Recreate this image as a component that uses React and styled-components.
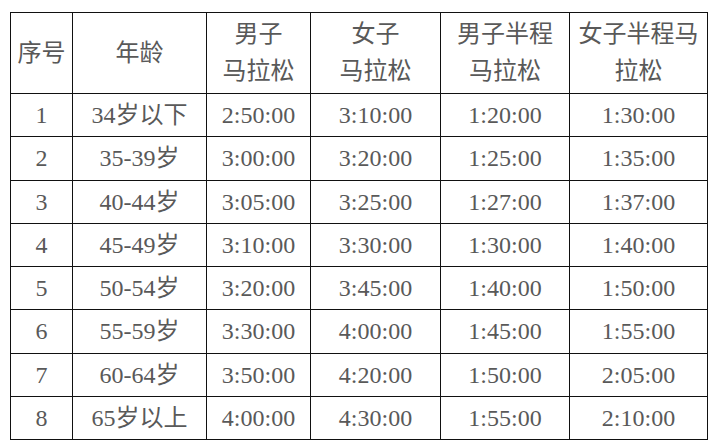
import React from "react";
import styled, { createGlobalStyle } from "styled-components";

const GlobalStyle = createGlobalStyle`
  html, body {
    margin: 0;
    padding: 0;
    background: #fff;
  }
`;

const Page = styled.div`
  padding: 12px 0 0 10px;
`;

const Table = styled.table`
  border-collapse: collapse;
  table-layout: fixed;
  width: 697px;
  font-family: "Liberation Serif", "Noto Sans CJK SC", serif;
  font-size: 24px;
  color: #595959;
`;

const Col = styled.col`
  width: ${props => props.$w}px;
`;

const Th = styled.th`
  border: 1px solid #111;
  font-weight: 400;
  line-height: 37px;
  text-align: center;
  padding: 0;
`;

const HeadRow = styled.tr`
  height: 81px;
`;

const Row = styled.tr`
  height: 43.25px;
`;

const Td = styled.td`
  border: 1px solid #111;
  text-align: center;
  padding: 0;
  line-height: 30px;
`;

const widths = [62, 134, 104, 130, 129, 138];

const headers = [
  ["序号"],
  ["年龄"],
  ["男子", "马拉松"],
  ["女子", "马拉松"],
  ["男子半程", "马拉松"],
  ["女子半程马", "拉松"],
];

const rows = [
  ["1", "34岁以下", "2:50:00", "3:10:00", "1:20:00", "1:30:00"],
  ["2", "35-39岁", "3:00:00", "3:20:00", "1:25:00", "1:35:00"],
  ["3", "40-44岁", "3:05:00", "3:25:00", "1:27:00", "1:37:00"],
  ["4", "45-49岁", "3:10:00", "3:30:00", "1:30:00", "1:40:00"],
  ["5", "50-54岁", "3:20:00", "3:45:00", "1:40:00", "1:50:00"],
  ["6", "55-59岁", "3:30:00", "4:00:00", "1:45:00", "1:55:00"],
  ["7", "60-64岁", "3:50:00", "4:20:00", "1:50:00", "2:05:00"],
  ["8", "65岁以上", "4:00:00", "4:30:00", "1:55:00", "2:10:00"],
];

export default function App() {
  return (
    <Page>
      <GlobalStyle />
      <Table>
        <colgroup>
          {widths.map((w, i) => (
            <Col key={i} $w={w} />
          ))}
        </colgroup>
        <thead>
          <HeadRow>
            {headers.map((lines, i) => (
              <Th key={i}>
                {lines.map((l, j) => (
                  <React.Fragment key={j}>
                    {j > 0 && <br />}
                    {l}
                  </React.Fragment>
                ))}
              </Th>
            ))}
          </HeadRow>
        </thead>
        <tbody>
          {rows.map((r, i) => (
            <Row key={i}>
              {r.map((c, j) => (
                <Td key={j}>{c}</Td>
              ))}
            </Row>
          ))}
        </tbody>
      </Table>
    </Page>
  );
}
